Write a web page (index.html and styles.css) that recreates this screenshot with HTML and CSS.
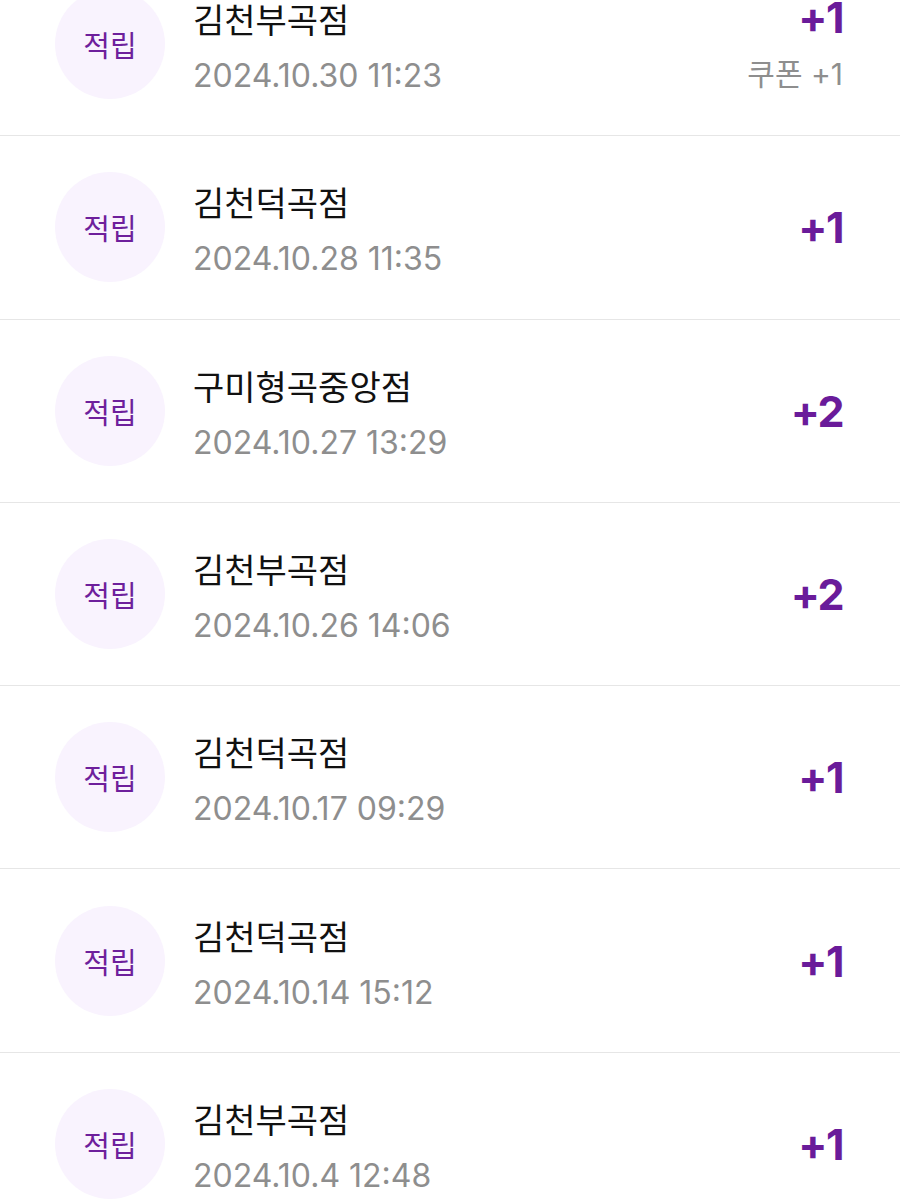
FILE: index.html
```html
<!DOCTYPE html>
<html lang="ko">
<head>
    <meta charset="UTF-8">
    <meta name="viewport" content="width=device-width, initial-scale=1.0">
    <title>적립 내역</title>
    <link rel="stylesheet" href="styles.css">
</head>
<body>
    <ul class="history">
        <li class="row">
            <div class="badge">적립</div>
            <div class="info">
                <div class="store">김천부곡점</div>
                <div class="date">2024.10.30 11:23</div>
            </div>
            <div class="amount">
                <div class="points">+1</div>
                <div class="coupon">쿠폰 +1</div>
            </div>
        </li>
        <li class="row">
            <div class="badge">적립</div>
            <div class="info">
                <div class="store">김천덕곡점</div>
                <div class="date">2024.10.28 11:35</div>
            </div>
            <div class="amount">
                <div class="points">+1</div>
            </div>
        </li>
        <li class="row">
            <div class="badge">적립</div>
            <div class="info">
                <div class="store">구미형곡중앙점</div>
                <div class="date">2024.10.27 13:29</div>
            </div>
            <div class="amount">
                <div class="points">+2</div>
            </div>
        </li>
        <li class="row">
            <div class="badge">적립</div>
            <div class="info">
                <div class="store">김천부곡점</div>
                <div class="date">2024.10.26 14:06</div>
            </div>
            <div class="amount">
                <div class="points">+2</div>
            </div>
        </li>
        <li class="row">
            <div class="badge">적립</div>
            <div class="info">
                <div class="store">김천덕곡점</div>
                <div class="date">2024.10.17 09:29</div>
            </div>
            <div class="amount">
                <div class="points">+1</div>
            </div>
        </li>
        <li class="row">
            <div class="badge">적립</div>
            <div class="info">
                <div class="store">김천덕곡점</div>
                <div class="date">2024.10.14 15:12</div>
            </div>
            <div class="amount">
                <div class="points">+1</div>
            </div>
        </li>
        <li class="row">
            <div class="badge">적립</div>
            <div class="info">
                <div class="store">김천부곡점</div>
                <div class="date">2024.10.4 12:48</div>
            </div>
            <div class="amount">
                <div class="points">+1</div>
            </div>
        </li>
    </ul>
</body>
</html>
```

FILE: styles.css
```css
body {
    margin: 0;
    background: #ffffff;
    font-family: Inter, "Noto Sans CJK KR", sans-serif;
    overflow: hidden;
}

.history {
    list-style: none;
    margin: -47px 0 0;
    padding: 0;
}

.row {
    display: flex;
    align-items: center;
    height: 183.3px;
    box-sizing: border-box;
    padding: 0 57px 0 55px;
    border-bottom: 1px solid #e6e6e6;
}

.badge {
    width: 110px;
    height: 110px;
    flex-shrink: 0;
    border-radius: 50%;
    background: #f9f3fe;
    color: #6e1f9c;
    font-family: "Noto Sans CJK KR", sans-serif;
    font-size: 29px;
    display: flex;
    align-items: center;
    justify-content: center;
}

.info {
    flex: 1;
    margin: 6px 0 0 28px;
    display: flex;
    flex-direction: column;
    gap: 16px;
}

.store {
    font-family: "Noto Sans CJK KR", sans-serif;
    font-size: 34px;
    line-height: 42px;
    color: #111111;
}

.date {
    font-size: 32px;
    line-height: 40px;
    color: #8e8e8e;
}

.amount {
    display: flex;
    flex-direction: column;
    align-items: flex-end;
    gap: 16px;
}

.points {
    font-size: 43px;
    line-height: 44px;
    font-weight: 700;
    color: #6a1b9a;
    letter-spacing: -1.5px;
}

.coupon {
    font-size: 30px;
    line-height: 38px;
    color: #8e8e8e;
}
```
